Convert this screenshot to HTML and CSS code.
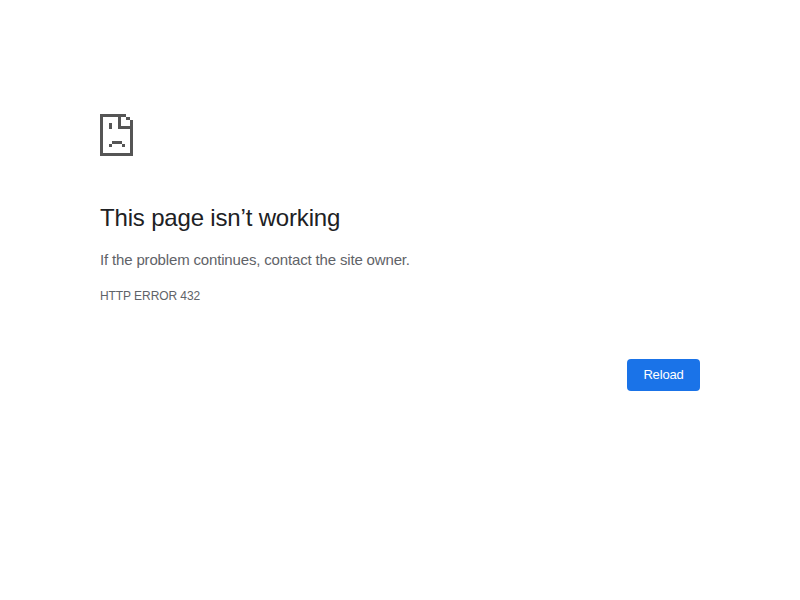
FILE: index.html
```html
<!DOCTYPE html>
<html lang="en">
<head>
<meta charset="utf-8">
<title>Error</title>
<link rel="stylesheet" href="styles.css">
</head>
<body>
<main class="wrapper">
<svg class="icon" width="33" height="42" viewBox="0 0 33 42" shape-rendering="crispEdges" aria-hidden="true">
<path fill="#555" fill-rule="evenodd" d="M0 0H26V3H30V6H33V42H0ZM3 3V39H30V15H18V3ZM21 3V12H30V6H26V3Z"/>
<path fill="#555" d="M9 9H12V15H9ZM12 27H22V30H12ZM9 30H12V33H9ZM22 30H25V33H22Z"/>
</svg>
<h1 class="title">This page isn’t working</h1>
<p class="message">If the problem continues, contact the site owner.</p>
<p class="code">HTTP ERROR 432</p>
<div class="actions"><button class="reload">Reload</button></div>
</main>
</body>
</html>
```
FILE: styles.css
```css
html, body { margin: 0; padding: 0; background: #fff; }
body { font-family: "Liberation Sans", Arial, sans-serif; font-size: 15px; color: #5f6368; }
.wrapper { width: 600px; margin: 0 auto; padding-top: 114px; display: flex; flex-direction: column; }
.icon { display: block; }
.title { margin: 46px 0 0; font-size: 24px; font-weight: 400; line-height: 32px; color: #202124; letter-spacing: -0.17px; }
.message { margin: 16px 0 0; font-size: 15px; line-height: 20px; letter-spacing: -0.16px; }
.code { margin: 18px 0 0; font-size: 12px; line-height: 16px; text-transform: uppercase; letter-spacing: -0.07px; }
.actions { display: flex; justify-content: flex-end; margin-top: 55px; }
.reload { width: 73px; height: 32px; padding: 0 0 2px; border: 0; border-radius: 4px; background: #1a73e8; color: #fff; font-family: inherit; font-size: 13px; letter-spacing: -0.17px; }
```
